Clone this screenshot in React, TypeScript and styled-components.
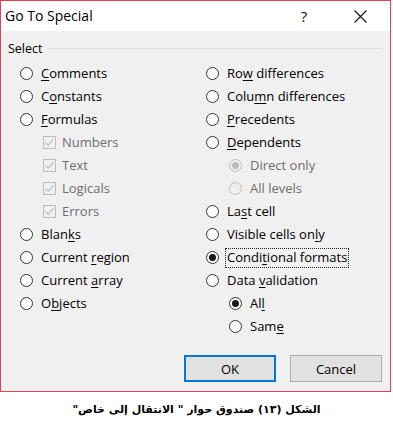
import React from "react";
import styled, { createGlobalStyle } from "styled-components";

const GlobalStyle = createGlobalStyle`
  html, body {
    margin: 0;
    padding: 0;
    background: #ffffff;
  }
  body {
    font-family: "Open Sans", "Noto Sans", sans-serif;
  }
`;

type Item = {
  label: string;
  key?: number; // index of the underlined access letter
  kind: "radio" | "check";
  level: 0 | 1;
  checked?: boolean;
  disabled?: boolean;
  focused?: boolean;
};

const leftItems: Item[] = [
  { label: "Comments", key: 0, kind: "radio", level: 0 },
  { label: "Constants", key: 1, kind: "radio", level: 0 },
  { label: "Formulas", key: 0, kind: "radio", level: 0 },
  { label: "Numbers", kind: "check", level: 1, checked: true, disabled: true },
  { label: "Text", kind: "check", level: 1, checked: true, disabled: true },
  { label: "Logicals", kind: "check", level: 1, checked: true, disabled: true },
  { label: "Errors", kind: "check", level: 1, checked: true, disabled: true },
  { label: "Blanks", key: 4, kind: "radio", level: 0 },
  { label: "Current region", key: 8, kind: "radio", level: 0 },
  { label: "Current array", key: 8, kind: "radio", level: 0 },
  { label: "Objects", key: 1, kind: "radio", level: 0 },
];

const rightItems: Item[] = [
  { label: "Row differences", key: 2, kind: "radio", level: 0 },
  { label: "Column differences", key: 4, kind: "radio", level: 0 },
  { label: "Precedents", key: 0, kind: "radio", level: 0 },
  { label: "Dependents", key: 0, kind: "radio", level: 0 },
  { label: "Direct only", kind: "radio", level: 1, checked: true, disabled: true },
  { label: "All levels", kind: "radio", level: 1, disabled: true },
  { label: "Last cell", key: 2, kind: "radio", level: 0 },
  { label: "Visible cells only", key: 16, kind: "radio", level: 0 },
  { label: "Conditional formats", key: 5, kind: "radio", level: 0, checked: true, focused: true },
  { label: "Data validation", key: 5, kind: "radio", level: 0 },
  { label: "All", key: 2, kind: "radio", level: 1, checked: true },
  { label: "Same", key: 3, kind: "radio", level: 1 },
];

const Label = ({ text, at }: { text: string; at?: number }) => {
  if (at === undefined) return <>{text}</>;
  return (
    <>
      {text.slice(0, at)}
      <u>{text[at]}</u>
      {text.slice(at + 1)}
    </>
  );
};

const Option = ({ item }: { item: Item }) => (
  <OptionRow level={item.level}>
    {item.kind === "radio" ? (
      <RadioCircle disabled={item.disabled}>
        {item.checked && <RadioDot disabled={item.disabled} />}
      </RadioCircle>
    ) : (
      <CheckBox disabled={item.disabled}>
        {item.checked && (
          <svg width="11" height="11" viewBox="0 0 11 11">
            <path d="M1.5 5.5 L4.2 8.2 L9.5 2.2" fill="none" stroke={item.disabled ? "#bcbcbc" : "#333"} strokeWidth="1.2" />
          </svg>
        )}
      </CheckBox>
    )}
    <OptionText disabled={item.disabled} focused={item.focused} check={item.kind === "check"}>
      <Label text={item.label} at={item.disabled ? undefined : item.key} />
    </OptionText>
  </OptionRow>
);

export default function App() {
  return (
    <Page>
      <GlobalStyle />
      <Dialog>
        <TitleBar>
          <Title>Go To Special</Title>
          <HelpButton>?</HelpButton>
          <CloseButton>
            <svg width="13" height="13" viewBox="0 0 13 13">
              <path d="M0.5 0.5 L12.5 12.5 M12.5 0.5 L0.5 12.5" stroke="#111" strokeWidth="1.1" />
            </svg>
          </CloseButton>
        </TitleBar>
        <Body>
          <GroupHeader>
            <Legend>Select</Legend>
            <GroupLine />
          </GroupHeader>
          <Columns>
            <Column>
              {leftItems.map((item) => (
                <Option key={item.label} item={item} />
              ))}
            </Column>
            <Column>
              {rightItems.map((item) => (
                <Option key={item.label} item={item} />
              ))}
            </Column>
          </Columns>
          <ButtonRow>
            <DialogButton primary>OK</DialogButton>
            <DialogButton>Cancel</DialogButton>
          </ButtonRow>
        </Body>
      </Dialog>
      <Caption dir="rtl">الشكل (١٣) صندوق حوار " الانتقال إلى خاص"</Caption>
    </Page>
  );
}

const Page = styled.div`
  width: 393px;
  height: 431px;
  background: #fff;
`;

const Dialog = styled.div`
  width: 389px;
  height: 390px;
  border: 1px solid #e5404f;
  background: #f0f0f0;
  display: flex;
  flex-direction: column;
`;

const TitleBar = styled.div`
  height: 30px;
  background: #fff;
  display: flex;
  align-items: center;
  padding-left: 4px;
`;

const Title = styled.div`
  flex: 1;
  font-size: 14px;
  color: #000;
  margin-top: -1px;
`;

const HelpButton = styled.div`
  width: 30px;
  font-size: 15px;
  color: #111;
  text-align: center;
  margin-right: 18px;
`;

const CloseButton = styled.div`
  width: 46px;
  display: flex;
  justify-content: center;
  margin-right: 7px;
`;

const Body = styled.div`
  flex: 1;
  display: flex;
  flex-direction: column;
  padding: 0 8px 0 7px;
`;

const GroupHeader = styled.div`
  display: flex;
  align-items: center;
  height: 22px;
  margin-top: 6px;
`;

const Legend = styled.div`
  font-size: 12.5px;
  color: #000;
  padding-right: 4px;
`;

const GroupLine = styled.div`
  flex: 1;
  height: 1px;
  background: #dcdcdc;
`;

const Columns = styled.div`
  display: grid;
  grid-template-columns: 186px 1fr;
  padding-left: 12px;
  margin-top: 3px;
`;

const Column = styled.div`
  display: flex;
  flex-direction: column;
`;

const OptionRow = styled.div<{ level: 0 | 1 }>`
  height: 23px;
  display: flex;
  align-items: center;
  padding-left: ${(p) => (p.level === 1 ? 23 : 0)}px;
`;

const RadioCircle = styled.span<{ disabled?: boolean }>`
  box-sizing: border-box;
  width: 13px;
  height: 13px;
  border-radius: 50%;
  border: 1px solid ${(p) => (p.disabled ? "#bcbcbc" : "#333")};
  background: ${(p) => (p.disabled ? "#f0f0f0" : "#fff")};
  display: flex;
  align-items: center;
  justify-content: center;
  flex: none;
`;

const RadioDot = styled.span<{ disabled?: boolean }>`
  width: 7px;
  height: 7px;
  border-radius: 50%;
  background: ${(p) => (p.disabled ? "#bcbcbc" : "#1a1a1a")};
`;

const CheckBox = styled.span<{ disabled?: boolean }>`
  box-sizing: border-box;
  width: 13px;
  height: 13px;
  border: 1px solid ${(p) => (p.disabled ? "#bcbcbc" : "#333")};
  background: ${(p) => (p.disabled ? "#f0f0f0" : "#fff")};
  display: flex;
  align-items: center;
  justify-content: center;
  flex: none;
`;

const OptionText = styled.span<{ disabled?: boolean; focused?: boolean; check?: boolean }>`
  font-size: 13px;
  color: ${(p) => (p.disabled ? "#6d6d6d" : "#000")};
  margin-left: ${(p) => (p.check ? 4 : 6)}px;
  padding: 1px 1px 2px 1px;
  border: 1px dotted ${(p) => (p.focused ? "#222" : "transparent")};
  line-height: 15px;
  white-space: nowrap;

  u {
    text-decoration-thickness: 1px;
    text-underline-offset: 2px;
  }
`;

const ButtonRow = styled.div`
  display: flex;
  justify-content: flex-end;
  gap: 14px;
  margin-top: auto;
  margin-bottom: 9px;
`;

const DialogButton = styled.button<{ primary?: boolean }>`
  box-sizing: border-box;
  width: 92px;
  height: 27px;
  font-family: "Open Sans", "Noto Sans", sans-serif;
  font-size: 13px;
  color: #000;
  background: #e1e1e1;
  border: ${(p) => (p.primary ? "2px solid #0078d7" : "1px solid #adadad")};
  padding: 0;
`;

const Caption = styled.div`
  text-align: center;
  font-family: "DejaVu Sans", sans-serif;
  font-weight: bold;
  font-size: 11px;
  color: #000;
  margin-top: 11px;
`;
